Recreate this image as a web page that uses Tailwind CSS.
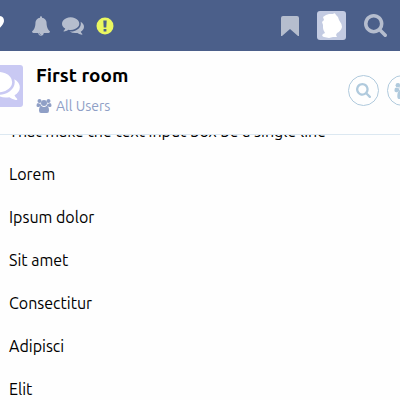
<!DOCTYPE html>
<html lang="en">
<head>
  <meta charset="UTF-8">
  <meta name="viewport" content="width=device-width, initial-scale=1">
  <title>First room</title>
  <script src="https://cdn.jsdelivr.net/npm/@tailwindcss/browser@4"></script>
</head>
<body class="h-screen overflow-hidden bg-[#fefefe] text-black font-[Ubuntu,'Noto_Sans',sans-serif]">

  <!-- icons used more than once -->
  <svg class="hidden">
    <symbol id="search" viewBox="64 128 1664 1664"><path d="M1216 832q0-185-131.5-316.5t-316.5-131.5-316.5 131.5-131.5 316.5 131.5 316.5 316.5 131.5 316.5-131.5 131.5-316.5zm512 832q0 52-38 90t-90 38q-54 0-90-38l-343-342q-179 124-399 124-143 0-273.5-55.5t-225-150-150-225-55.5-273.5 55.5-273.5 150-225 225-150 273.5-55.5 273.5 55.5 225 150 150 225 55.5 273.5q0 220-124 399l343 343q37 37 37 90z"/></symbol>
    <symbol id="comments" viewBox="0 256 1792 1408"><path d="M1408 768q0 139-94 257t-256.5 186.5-353.5 68.5q-86 0-176-16-124 88-278 128-36 9-86 16h-3q-11 0-20.5-8t-11.5-21q-1-3-1-6.5t.5-6.5 2-6l2.5-5 3.5-5.5 4-5 4.5-5 4-4.5q5-6 23-25t26-29.5 22.5-29 25-38.5 20.5-44q-124-72-195-177t-71-224q0-139 94-257t256.5-186.5 353.5-68.5 353.5 68.5 256.5 186.5 94 257zm384 256q0 120-71 224.5t-195 176.5q10 24 20.5 44t25 38.5 22.5 29 26 29.5 23 25q1 1 4 4.5t4.5 5 4 5 3.5 5.5l2.5 5 2 6 .5 6.5-1 6.5q-3 14-13 22t-22 7q-50-7-86-16-154-40-278-128-90 16-176 16-271 0-472-132 58 4 88 4 161 0 309-45t264-129q125-92 192-212t67-254q0-77-23-152 129 71 204 178t75 230z"/></symbol>
    <symbol id="users" viewBox="0 0 30 28">
      <circle cx="6" cy="4" r="4"/><circle cx="24" cy="4" r="4"/><circle cx="15" cy="8" r="6"/>
      <path d="M3 8Q6 10 8 9Q8 12 10 14Q7 14 5 16H3Q0 16 0 13Q0 8 3 8ZM27 8Q24 10 22 9Q22 12 20 14Q23 14 25 16H27Q30 16 30 13Q30 8 27 8ZM10 14Q15 18 20 14Q25 14 25 23Q25 28 21 28H9Q5 28 5 23Q5 14 10 14Z"/>
    </symbol>
  </svg>

  <header class="relative z-10">
    <nav class="flex h-[51px] items-center justify-between bg-[#4b5f8a] pr-[13px] text-[#b5bdce]">
      <div class="flex items-center gap-3">
        <button aria-label="Home" class="-ml-4 mr-4 text-white">
          <svg class="h-5 w-5" viewBox="0 0 20 20" fill="currentColor"><path d="M10 2Q12 0 15 0Q20 0 20 5Q20 9 10 17Q0 9 0 5Q0 0 5 0Q8 0 10 2Z"/></svg>
        </button>
        <button aria-label="Notifications">
          <svg class="h-5 w-[18px]" viewBox="64 0 1664 1792" fill="currentColor"><path d="M912 1696q0-16-16-16-59 0-101.5-42.5t-42.5-101.5q0-16-16-16t-16 16q0 73 51.5 124.5t124.5 51.5q16 0 16-16zm816-288q0 52-38 90t-90 38h-448q0 106-75 181t-181 75-181-75-75-181h-448q-52 0-90-38t-38-90q50-42 91-88t85-119.5 74.5-158.5 50-206 19.5-260q0-152 117-282.5t307-158.5q-8-19-8-39 0-40 28-68t68-28 68 28 28 68q0 20-8 39 190 28 307 158.5t117 282.5q0 139 19.5 260t50 206 74.5 158.5 85 119.5 91 88z"/></svg>
        </button>
        <button aria-label="Messages">
          <svg class="h-[18px] w-[22px]" fill="currentColor"><use href="#comments"/></svg>
        </button>
        <button aria-label="Alerts" class="text-[#eaf760]">
          <svg class="h-[18px] w-[18px]" viewBox="0 0 18 18"><circle cx="9" cy="9" r="8.5" fill="currentColor"/><path d="M7.3 3.4H10.7L10.3 10.6H7.7ZM7.6 12H10.4V14.6H7.6Z" fill="#4b5f8a"/></svg>
        </button>
      </div>
      <div class="flex items-center gap-[18px]">
        <button aria-label="Bookmarks">
          <svg class="h-[22px] w-[18px]" viewBox="0 0 18 22" fill="currentColor"><path d="M2 1H16Q18 1 18 3V21H17L9 14L1 21H0V3Q0 1 2 1Z"/></svg>
        </button>
        <button aria-label="Profile" class="h-[29px] w-[29px] overflow-hidden rounded-[3px] bg-[#c3cbe2]">
          <svg class="h-[29px] w-[29px]" viewBox="0 0 29 29" fill="#fff"><path d="M9 4L12 3L16 3Q18 1 19 4Q22 6 22 9Q25 13 25 16Q24 20 20 22L19 24L20 26L16 26L12 27L7 26Q4 25 6 23L8 22Q6 19 6 17L6 14L5 11L7 9L6 6Z"/></svg>
        </button>
        <button aria-label="Search">
          <svg class="h-[23px] w-[23px]" fill="currentColor"><use href="#search"/></svg>
        </button>
      </div>
    </nav>

    <div class="flex h-[84px] items-start justify-between border-b border-[#dce8f1] bg-[#fefefe]">
      <div class="-ml-5 flex gap-[13px] pt-3">
        <div class="mt-[2px] flex h-[42px] w-[43px] items-center justify-center rounded-[3px] bg-[#c9c9f3]">
          <svg class="h-7 w-9" fill="#fff"><use href="#comments"/></svg>
        </div>
        <div>
          <h1 class="text-[19px] leading-6 font-bold">First room</h1>
          <p class="mt-[7px] flex items-center gap-1 text-[14px] leading-6 text-[#8f9fc6]">
            <svg class="h-[14px] w-4" fill="currentColor"><use href="#users"/></svg>
            All Users
          </p>
        </div>
      </div>
      <div class="-mr-[18px] flex gap-2 pt-6 text-[#b0cadd]">
        <button aria-label="Search room" class="flex h-[31px] w-[31px] items-center justify-center rounded-full border border-[#b0cadd]">
          <svg class="h-[15px] w-[15px]" fill="currentColor"><use href="#search"/></svg>
        </button>
        <button aria-label="Members" class="flex h-[31px] w-[31px] items-center justify-center rounded-full border border-[#b0cadd]">
          <svg class="h-4 w-[18px]" fill="currentColor"><use href="#users"/></svg>
        </button>
      </div>
    </div>
  </header>

  <!-- scrolled so the first line sits partly under the room header -->
  <main class="-mt-[25px] px-[9px] text-[16px] leading-[43px]">
    <p>That make the text input box be a single line</p>
    <p>Lorem</p>
    <p>Ipsum dolor</p>
    <p>Sit amet</p>
    <p>Consectitur</p>
    <p>Adipisci</p>
    <p>Elit</p>
  </main>
</body>
</html>
